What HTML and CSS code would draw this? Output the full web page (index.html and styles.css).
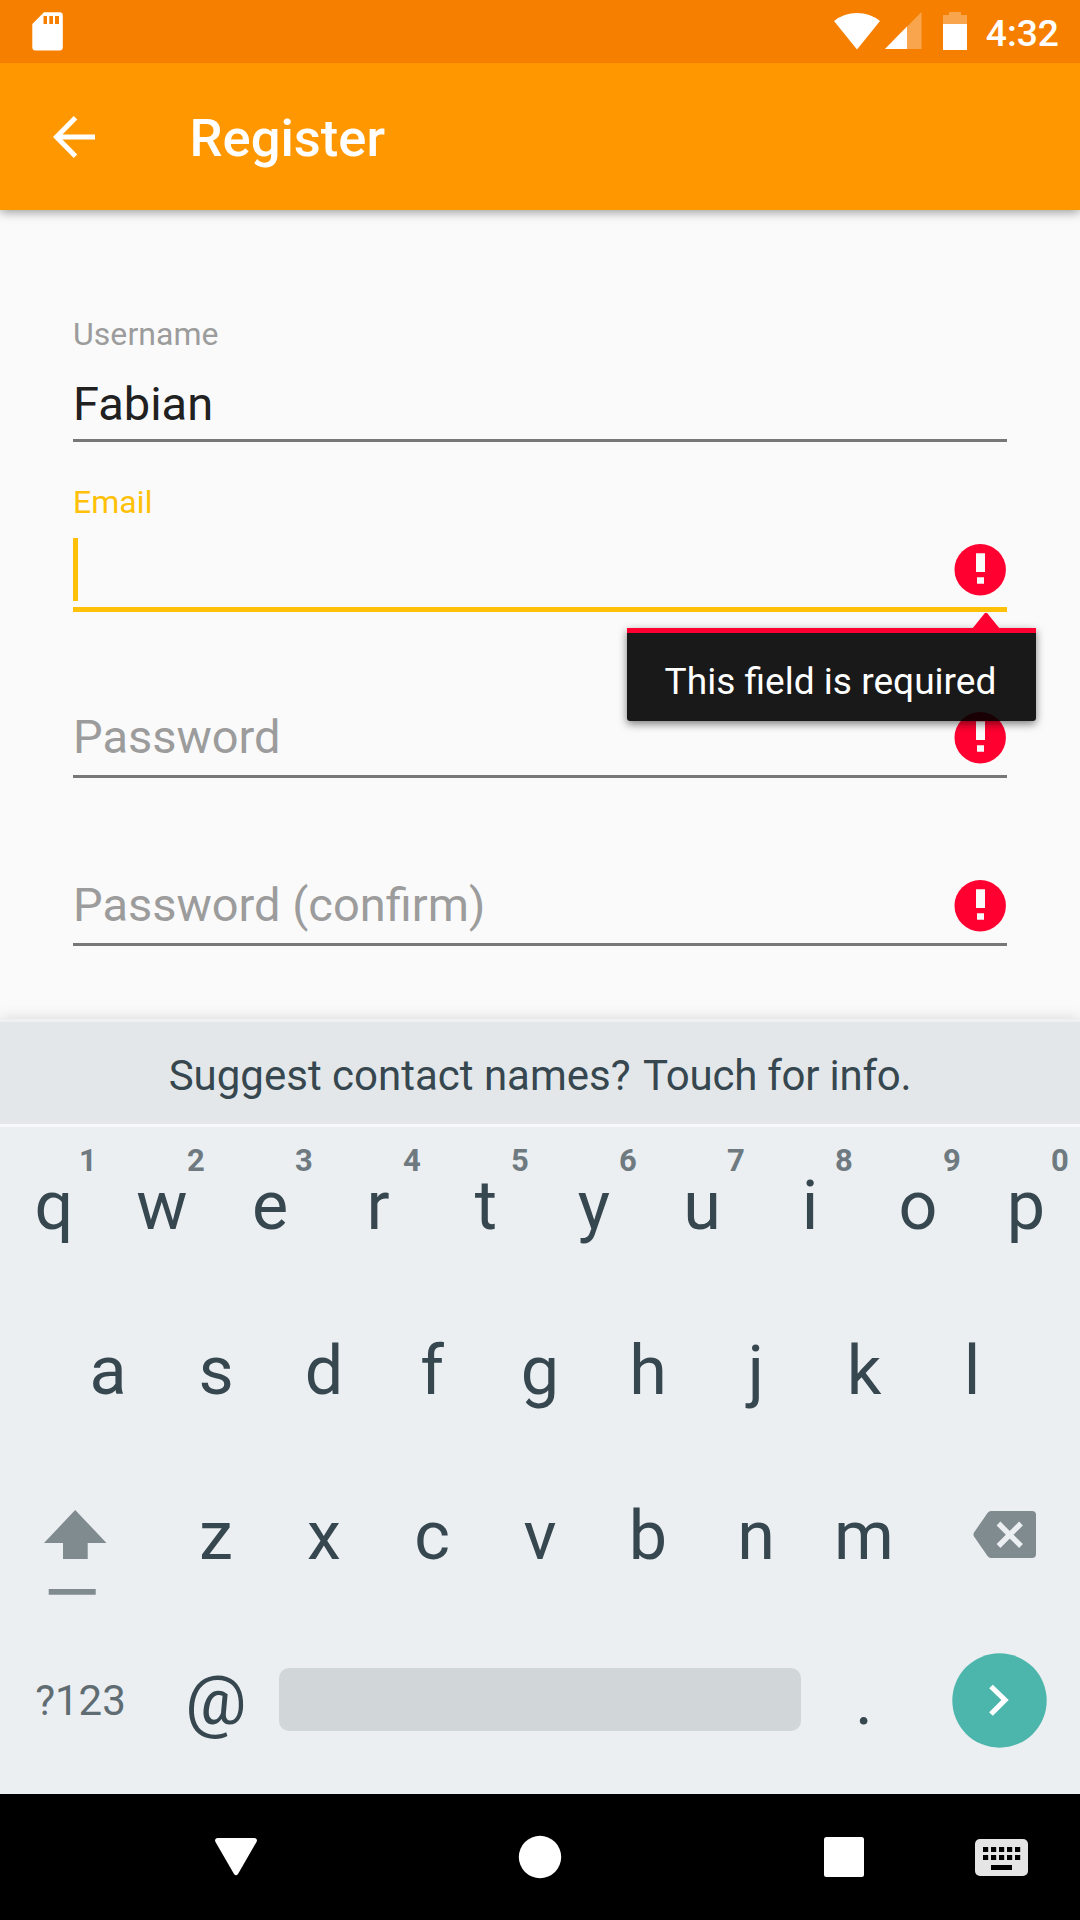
FILE: index.html
```html
<!DOCTYPE html>
<html lang="en">
<head>
<meta charset="utf-8">
<title>Register</title>
<link rel="stylesheet" href="styles.css">
</head>
<body>
<div class="screen">
  <header class="status-bar">
    <svg class="sd-icon" width="31" height="39" viewBox="0 0 31 39"><path fill="#fff" fill-rule="evenodd" d="M12 0.300H27.500Q30.800 0.300 30.800 3.500V35Q30.800 38.500 27.500 38.500H3.500Q0.300 38.500 0.300 35V12ZM11.500 4V12H15V4ZM17.300 4V12H21V4ZM23 4V12H27V4Z"/></svg>
    <svg class="wifi-icon" width="46" height="37" viewBox="0 0 46 37"><path fill="#fff" d="M0 8Q10 0 23 0T46 8L23 36.500Z"/></svg>
    <svg class="signal-icon" width="37" height="37" viewBox="0 0 37 37"><path fill="#fff" fill-opacity=".3" d="M0 37L36.500 0V37Z"/><path fill="#fff" d="M0 37L22 14.500V37Z"/></svg>
    <svg class="battery-icon" width="24" height="38" viewBox="0 0 24 38"><path fill="#fff" fill-opacity=".3" d="M0 3H6V0H18V3H24V12H0Z"/><path fill="#fff" d="M0 12H24V38H0Z"/></svg>
    <span class="clock">4:32</span>
  </header>
  <div class="toolbar">
    <svg class="back-icon" width="42" height="42" viewBox="0 0 42 42"><path fill="none" stroke="#fff" stroke-width="5" d="M22.500 1.800L3.500 21L22.500 40.200M3.500 21H42"/></svg>
    <h1 class="title">Register</h1>
  </div>

  <main class="form">
    <div class="field">
      <label class="label">Username</label>
      <div class="input"><span class="value">Fabian</span></div>
    </div>
    <div class="field field-active">
      <label class="label">Email</label>
      <div class="input">
        <span class="caret"></span>
        <svg class="error-icon" width="52" height="52" viewBox="0 0 52 52"><circle cx="26.200" cy="25.700" r="25.700" fill="#ff0030"/><path fill="#fafafa" d="M22 9.300H31V28H22ZM23 33.200H30V39.800H23Z"/></svg>
      </div>
      <div class="tooltip">This field is required
        <svg class="tooltip-arrow" width="28" height="17" viewBox="0 0 28 17"><path fill="#ff0030" d="M0 17L12.500 1.500Q14 0 15.500 1.500L28 17Z"/></svg>
      </div>
    </div>
    <div class="field">
      <label class="label"></label>
      <div class="input"><span class="placeholder">Password</span>
        <svg class="error-icon" width="52" height="52" viewBox="0 0 52 52"><circle cx="26.200" cy="25.700" r="25.700" fill="#ff0030"/><path fill="#fafafa" d="M22 9.300H31V28H22ZM23 33.200H30V39.800H23Z"/></svg>
      </div>
    </div>
    <div class="field">
      <label class="label"></label>
      <div class="input"><span class="placeholder">Password (confirm)</span>
        <svg class="error-icon" width="52" height="52" viewBox="0 0 52 52"><circle cx="26.200" cy="25.700" r="25.700" fill="#ff0030"/><path fill="#fafafa" d="M22 9.300H31V28H22ZM23 33.200H30V39.800H23Z"/></svg>
      </div>
    </div>
  </main>

  <section class="keyboard">
    <div class="suggestion">Suggest contact names? <span class="suggestion-action">Touch for info.</span></div>
    <div class="row">
      <span class="key">q<sup class="hint">1</sup></span><span class="key">w<sup class="hint">2</sup></span><span class="key">e<sup class="hint">3</sup></span><span class="key">r<sup class="hint">4</sup></span><span class="key">t<sup class="hint">5</sup></span><span class="key">y<sup class="hint">6</sup></span><span class="key">u<sup class="hint">7</sup></span><span class="key">i<sup class="hint">8</sup></span><span class="key">o<sup class="hint">9</sup></span><span class="key">p<sup class="hint">0</sup></span>
    </div>
    <div class="row">
      <span class="key">a</span><span class="key">s</span><span class="key">d</span><span class="key">f</span><span class="key">g</span><span class="key">h</span><span class="key">j</span><span class="key">k</span><span class="key">l</span>
    </div>
    <div class="row">
      <span class="key key-wide"><svg class="shift-icon" width="63" height="85" viewBox="0 0 63 85"><path fill="#808b8f" d="M31.200 0L62.500 33H43.700V49H19V33H0ZM4.700 79H51.700V84.700H4.700Z"/></svg></span>
      <span class="key">z</span><span class="key">x</span><span class="key">c</span><span class="key">v</span><span class="key">b</span><span class="key">n</span><span class="key">m</span>
      <span class="key key-wide"><svg class="delete-icon" width="63" height="48" viewBox="0 0 63 48"><path fill="#808b8f" d="M18 0H59Q63 0 63 4V43Q63 47 59 47H18Q16 47 14.500 45L1 25.500Q0 23.500 1 21.500L14.500 2Q16 0 18 0Z"/><path fill="none" stroke="#ebeff2" stroke-width="5.400" d="M25.500 12.500L48 35M48 12.500L25.500 35"/></svg></span>
    </div>
    <div class="row">
      <span class="key key-wide key-symbols">?123</span>
      <span class="key">@</span>
      <span class="key key-space"><span class="space-bar"></span></span>
      <span class="key">.</span>
      <span class="key key-wide"><svg class="next-icon" width="95" height="95" viewBox="0 0 95 95"><circle cx="47.500" cy="47.500" r="47.200" fill="#4db6ac"/><path fill="none" stroke="#fff" stroke-width="5.200" d="M39 33.500L53 47L39 61"/></svg></span>
    </div>
  </section>

  <nav class="nav-bar">
    <svg class="nav-icon" width="44" height="40" viewBox="0 0 44 40"><path fill="#fff" d="M3 1H41Q44 2 42.500 5L24 37Q22 39.500 20 37L1.500 5Q0 2 3 1Z"/></svg>
    <svg class="nav-icon" width="44" height="44" viewBox="0 0 44 44"><circle cx="22" cy="22" r="21.200" fill="#fff"/></svg>
    <svg class="nav-icon" width="44" height="44" viewBox="0 0 44 44"><rect x="2" y="2" width="40" height="40" rx="2.500" fill="#fff"/></svg>
    <svg class="ime-icon" width="53" height="37" viewBox="0 0 53 37"><rect width="53" height="37" rx="5" fill="#e5e5e5"/><path stroke="#000" stroke-width="5" stroke-dasharray="5.200 2.800" d="M8 10.500H45.500M8 18.500H45.500"/><path fill="#000" d="M16 26H37V31H16Z"/></svg>
  </nav>
</div>
</body>
</html>
```
FILE: styles.css
```css
* { box-sizing: border-box; }

body {
  margin: 0;
  font-family: Roboto, "Liberation Sans", sans-serif;
  background: #fafafa;
}

svg { display: block; flex: none; }

.screen {
  width: 1080px;
  height: 1920px;
  display: flex;
  flex-direction: column;
  overflow: hidden;
}

.status-bar {
  position: relative;
  z-index: 1;
  height: 63px;
  padding: 0 21px 0 32px;
  display: flex;
  align-items: flex-start;
  background: #f77f00;
}
.sd-icon { margin-top: 12px; }
.wifi-icon { margin: 13px 5px 0 auto; }
.signal-icon { margin: 12px 21px 0 0; }
.battery-icon { margin: 12px 19px 0 0; }
.clock {
  font-size: 37.2px;
  font-weight: 500;
  line-height: 44px;
  margin-top: 11px;
  color: #fff;
}

.toolbar {
  height: 147px;
  padding-left: 53px;
  display: flex;
  align-items: center;
  gap: 94.5px;
  background: #ff9800;
  box-shadow: 0 2px 10px rgba(0, 0, 0, .4);
}
.title {
  margin: 3px 0 0;
  font-size: 52.5px;
  font-weight: 500;
  line-height: 62px;
  color: #fff;
}

.form {
  height: 809px;
  padding: 64px 73px 0;
}
.field {
  position: relative;
  height: 168px;
  display: flex;
  flex-direction: column;
  justify-content: flex-end;
}
.label {
  height: 40px;
  margin-bottom: 12px;
  font-size: 32px;
  letter-spacing: .05px;
  line-height: 40px;
  color: #9c9c9c;
}
.input {
  height: 76px;
  display: flex;
  align-items: flex-start;
  justify-content: space-between;
  border-bottom: 3px solid #777;
}
.value, .placeholder {
  font-size: 47px;
  line-height: 56px;
}
.value { margin-top: 10px; color: #212121; }
.placeholder { margin-top: 7px; color: #9c9c9c; }
.error-icon { margin: 10px 1px 0 0; }

.field-active .label { color: #ffc107; margin-bottom: 13px; }
.field-active .input {
  height: 77px;
  margin-bottom: -2px;
  border-bottom: 5px solid #ffc107;
}
.caret { width: 5px; height: 63px; margin-top: 3px; background: #ffc107; }
.field-active .error-icon { margin-top: 9px; }

.tooltip {
  position: absolute;
  z-index: 1;
  top: 186px;
  right: -29px;
  width: 409px;
  height: 93px;
  padding: 27px 2px 0 0;
  border-top: 5px solid #ff0030;
  border-radius: 0 0 3px 3px;
  background: rgba(0, 0, 0, .9);
  background-clip: padding-box;
  box-shadow: 0 3px 8px rgba(0, 0, 0, .5);
  font-size: 37.1px;
  line-height: 43px;
  text-align: center;
  color: #fff;
}
.tooltip-arrow {
  position: absolute;
  top: -21px;
  right: 36px;
}

.keyboard {
  height: 775px;
  border-top: 3px solid #f0f0f0;
  background: #ebeff2;
  color: #37474f;
  box-shadow: 0 0 14px rgba(0, 0, 0, .15);
}
.suggestion {
  height: 105px;
  padding-top: 3px;
  border-bottom: 3px solid #f6f8f9;
  background: #e3e7ea;
  font-size: 42px;
  line-height: 102px;
  text-align: center;
}
.suggestion-action { margin-left: 2px; letter-spacing: -.24px; }
.row {
  height: 165px;
  display: flex;
  justify-content: center;
}
.key {
  position: relative;
  width: 108px;
  font-size: 68.25px;
  line-height: 158px;
  text-align: center;
}
.key-wide { width: 162px; }
.hint {
  position: absolute;
  top: 16px;
  left: 79px;
  font-size: 31px;
  font-weight: 700;
  line-height: 36px;
  color: #6f7a80;
}
.shift-icon { margin: 53px 0 0 44px; }
.delete-icon { margin: 54px 0 0 55px; }
.key-symbols {
  padding-right: 1px;
  font-size: 42px;
  line-height: 158px;
  color: #5f6d73;
}
.key-space { width: 540px; padding: 46px 9px 0; }
.space-bar {
  display: block;
  height: 63px;
  border-radius: 10px;
  background: #d1d6d9;
}
.next-icon { margin: 30.500px 0 0 33.500px; }

.nav-bar {
  height: 126px;
  padding: 0 53px 0 214px;
  display: flex;
  align-items: center;
  background: #000;
}
.nav-icon { margin-right: 260px; }
.nav-icon:nth-of-type(3) { margin-right: 109px; }
```
